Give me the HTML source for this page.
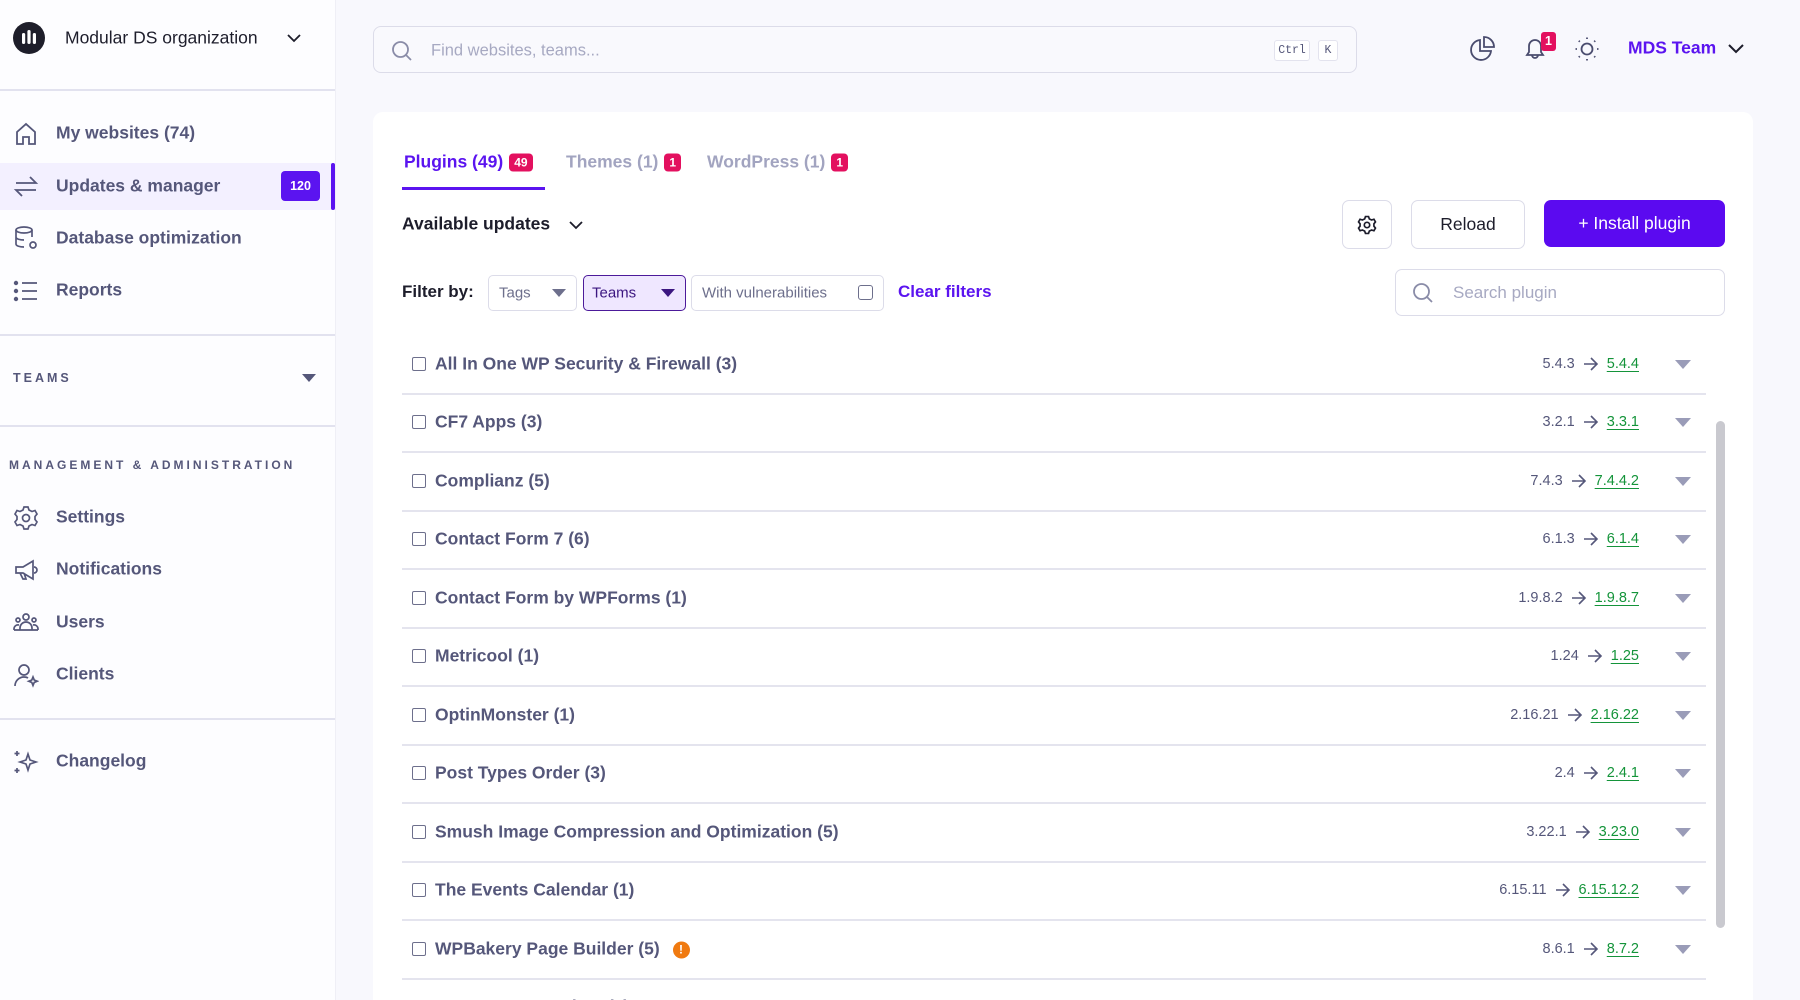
<!DOCTYPE html>
<html><head><meta charset="utf-8"><style>
*{box-sizing:border-box;margin:0;padding:0}
html{overflow:hidden;width:1800px;height:1000px}
body{width:1800px;height:1000px;overflow:hidden;background:#f8f8fd;font-family:"Liberation Sans",sans-serif;position:relative;color:#4a4c6e}
.a{position:absolute;white-space:nowrap}
.side{position:absolute;left:0;top:0;width:335px;height:1000px;background:#fdfdff}
.hr{position:absolute;left:0;width:335px;height:2px;background:#e2e2ef}
.nav{position:absolute;left:56px;font-size:17.5px;font-weight:bold;color:#55577a;transform:translateY(-50%);white-space:nowrap}
.ico{position:absolute;left:13px;width:26px;height:26px;transform:translateY(-50%)}
.cap{position:absolute;font-size:12.5px;letter-spacing:3px;font-weight:bold;color:#55577a;transform:translateY(-50%);white-space:nowrap}
.vc{transform:translateY(-50%)}
.name{position:absolute;left:435px;font-size:17.5px;font-weight:bold;color:#55577a;white-space:nowrap}
.cb{position:absolute;left:412px;width:14px;height:14px;border:1.6px solid #6d6f8c;border-radius:2px}
.line{position:absolute;left:402px;width:1304px;height:2px;background:#e4e4ee}
.ver{position:absolute;right:161px;font-size:14.5px;color:#55577a;white-space:nowrap}
.ver u{color:#14943a;text-decoration:underline;text-underline-offset:3px}
.ver svg{vertical-align:-3px;margin:0 8px}
.tri{position:absolute;left:1675px;width:0;height:0;border-left:8px solid transparent;border-right:8px solid transparent;border-top:9px solid #9a9cb8}
.bdg{display:inline-block;background:#e3105f;color:#fff;font-size:12px;font-weight:bold;border-radius:4px;padding:2px 5px;vertical-align:middle;margin-left:6px}
.box{position:absolute;border:1.5px solid #dcdce9;border-radius:5px;background:#fff}
</style></head><body>
<div class="side">
  <svg class="a" style="left:13px;top:22px" width="32" height="32" viewBox="0 0 32 32"><circle cx="16" cy="16" r="16" fill="#1e1e2a"/><rect x="9" y="11" width="3.2" height="11" rx="1.6" fill="#fff"/><rect x="14.4" y="8" width="3.2" height="14" rx="1.6" fill="#fff"/><rect x="19.8" y="11" width="3.2" height="11" rx="1.6" fill="#fff"/></svg>
  <div class="a vc" style="left:65px;top:38px;font-size:17.5px;color:#1d1d2b">Modular DS organization</div>
  <svg class="a" style="left:286px;top:32px" width="16" height="12" viewBox="0 0 16 12"><path d="M2 3l6 6 6-6" stroke="#1d1d2b" stroke-width="1.8" fill="none"/></svg>
  <div class="hr" style="top:89px"></div>
  <svg class="ico" style="top:134px" viewBox="0 0 26 26" fill="none" stroke="#55577a" stroke-width="1.8"><path d="M4 23V11l9-8 9 8v12h-6v-7h-6v7z"/></svg>
  <div class="nav" style="top:133px">My websites (74)</div>
  <div class="a" style="left:0;top:163px;width:335px;height:47px;background:#f3f0ff"></div>
  <div class="a" style="left:331px;top:163px;width:4px;height:47px;background:#5b14f0;border-radius:2px"></div>
  <svg class="ico" style="top:186px" viewBox="0 0 26 26" fill="none" stroke="#55577a" stroke-width="1.8"><path d="M3 10h20l-6-6M23 17H3l6 6"/></svg>
  <div class="nav" style="top:186px">Updates &amp; manager</div>
  <div class="a" style="left:281px;top:171px;width:39px;height:30px;background:#5b14f0;border-radius:4px;color:#fff;font-size:12.5px;font-weight:bold;text-align:center;line-height:30px">120</div>
  <svg class="ico" style="top:238px" viewBox="0 0 26 26" fill="none" stroke="#55577a" stroke-width="1.7"><ellipse cx="11" cy="5" rx="8" ry="3"/><path d="M3 5v14c0 2 4 3 8 3M19 5v7M3 12c0 2 4 3 8 3"/><circle cx="20" cy="20" r="3"/></svg>
  <div class="nav" style="top:238px">Database optimization</div>
  <svg class="ico" style="top:291px" viewBox="0 0 26 26" fill="none" stroke="#55577a" stroke-width="1.8"><path d="M9 5h15M9 13h15M9 21h15"/><circle cx="3" cy="5" r="1.3" fill="#55577a"/><circle cx="3" cy="13" r="1.3" fill="#55577a"/><circle cx="3" cy="21" r="1.3" fill="#55577a"/></svg>
  <div class="nav" style="top:290px">Reports</div>
  <div class="hr" style="top:334px"></div>
  <div class="cap" style="left:13px;top:378px">TEAMS</div>
  <div class="a" style="left:302px;top:374px;border-left:7px solid transparent;border-right:7px solid transparent;border-top:8px solid #55577a"></div>
  <div class="hr" style="top:425px"></div>
  <div class="cap" style="left:9px;top:465px;font-size:12px">MANAGEMENT &amp; ADMINISTRATION</div>
  <svg class="ico" style="top:518px" viewBox="0 0 26 26" fill="none" stroke="#55577a" stroke-width="1.7"><path d="M11 2h4l1 3 3 1.5 3-1 2 3.5-2 2.5v3l2 2.5-2 3.5-3-1-3 1.5-1 3h-4l-1-3-3-1.5-3 1-2-3.5 2-2.5v-3l-2-2.5 2-3.5 3 1 3-1.5z"/><circle cx="13" cy="13" r="3.5"/></svg>
  <div class="nav" style="top:517px">Settings</div>
  <svg class="ico" style="top:570px" viewBox="0 0 26 26" fill="none" stroke="#55577a" stroke-width="1.7"><path d="M3 10h7l10-6v18l-10-6H3zM7 16l3 6h3l-2-6M21 10a3 3 0 010 6"/></svg>
  <div class="nav" style="top:569px">Notifications</div>
  <svg class="ico" style="top:622px" viewBox="0 0 26 26" fill="none" stroke="#55577a" stroke-width="1.7"><circle cx="13" cy="8" r="3"/><circle cx="5" cy="11" r="2"/><circle cx="21" cy="11" r="2"/><path d="M7 21v-2a6 6 0 0112 0v2zM1 21v-1a4 4 0 015-4M25 21v-1a4 4 0 00-5-4M1 21h24"/></svg>
  <div class="nav" style="top:622px">Users</div>
  <svg class="ico" style="top:675px" viewBox="0 0 26 26" fill="none" stroke="#55577a" stroke-width="1.7"><circle cx="11" cy="8" r="5"/><path d="M2 24c0-5 4-9 9-9 2 0 3 .3 4 1M20 15l1.2 3 3 1.2-3 1.2-1.2 3-1.2-3-3-1.2 3-1.2z"/></svg>
  <div class="nav" style="top:674px">Clients</div>
  <div class="hr" style="top:718px"></div>
  <svg class="ico" style="top:762px" viewBox="0 0 26 26" fill="none" stroke="#55577a" stroke-width="1.7"><path d="M15 5l2 6 6 2-6 2-2 6-2-6-6-2 6-2zM4 2v5M1.5 4.5h5M4 19v5M1.5 21.5h5"/></svg>
  <div class="nav" style="top:761px">Changelog</div>
</div>
<div class="a" style="left:335px;top:0;width:1px;height:1000px;background:#efeff6"></div>

<div class="box" style="left:373px;top:26px;width:984px;height:47px;background:#f9f9fd;border-radius:8px"></div>
<svg class="a" style="left:391px;top:40px" width="22" height="22" viewBox="0 0 22 22" fill="none" stroke="#8a8ca8" stroke-width="1.8"><circle cx="9.5" cy="9.5" r="7.5"/><path d="M15 15l5 5"/></svg>
<div class="a vc" style="left:431px;top:51px;font-size:16.5px;color:#a7a9c2">Find websites, teams...</div>
<div class="a" style="left:1274px;top:40px;width:36px;height:21px;border:1px solid #e3e3ee;border-radius:3px;background:#fff;font:11.5px 'Liberation Mono',monospace;color:#55577a;text-align:center;line-height:19px">Ctrl</div>
<div class="a" style="left:1318px;top:40px;width:20px;height:21px;border:1px solid #e3e3ee;border-radius:3px;background:#fff;font:11.5px 'Liberation Mono',monospace;color:#55577a;text-align:center;line-height:19px">K</div>
<svg class="a" style="left:1469px;top:36px" width="26" height="26" viewBox="0 0 26 26" fill="none" stroke="#4a4c6e" stroke-width="1.8"><path d="M11 4a10 10 0 1011 11H11z"/><path d="M15 1v10h10A10 10 0 0015 1z"/></svg>
<svg class="a" style="left:1522px;top:36px" width="26" height="26" viewBox="0 0 26 26" fill="none" stroke="#4a4c6e" stroke-width="1.8"><path d="M5 19h16l-2-3v-6a6 6 0 00-12 0v6zM10 19a3 3 0 006 0"/></svg>
<div class="a" style="left:1541px;top:32px;width:15px;height:19px;background:#e3105f;border-radius:3px;color:#fff;font-size:12.5px;font-weight:bold;text-align:center;line-height:19px">1</div>
<svg class="a" style="left:1574px;top:36px" width="26" height="26" viewBox="0 0 26 26" fill="none" stroke="#4a4c6e" stroke-width="1.8"><circle cx="13" cy="13" r="5.5"/><path d="M13 1.5v1.5M13 23v1.5M1.5 13h1.5M23 13h1.5M4.8 4.8l1 1M20.2 20.2l1 1M4.8 21.2l1-1M20.2 5.8l1-1"/></svg>
<div class="a vc" style="left:1628px;top:48px;font-size:17.5px;font-weight:bold;color:#5b14f0">MDS Team</div>
<svg class="a" style="left:1727px;top:42px" width="18" height="12" viewBox="0 0 18 12"><path d="M2 3l7 7 7-7" stroke="#1d1d2b" stroke-width="2" fill="none"/></svg>

<div class="a" style="left:373px;top:112px;width:1380px;height:888px;background:#fff;border-radius:10px 10px 0 0"></div>
<div class="a vc" style="left:404px;top:162px;font-size:17.5px;font-weight:bold;color:#5b14f0">Plugins (49)<span class="bdg">49</span></div>
<div class="a" style="left:402px;top:187px;width:143px;height:3px;background:#5b14f0"></div>
<div class="a vc" style="left:566px;top:162px;font-size:17.5px;font-weight:bold;color:#a2a4c0">Themes (1)<span class="bdg">1</span></div>
<div class="a vc" style="left:707px;top:162px;font-size:17.5px;font-weight:bold;color:#a2a4c0">WordPress (1)<span class="bdg">1</span></div>
<div class="a vc" style="left:402px;top:224px;font-size:17.5px;font-weight:bold;color:#1d1d2b">Available updates</div>
<svg class="a" style="left:568px;top:219px" width="16" height="12" viewBox="0 0 16 12"><path d="M2 3l6 6 6-6" stroke="#1d1d2b" stroke-width="1.8" fill="none"/></svg>
<div class="box" style="left:1342px;top:200px;width:50px;height:49px;border-radius:7px"></div>
<svg class="a" style="left:1357px;top:215px" width="20" height="20" viewBox="0 0 26 26" fill="none" stroke="#1d1d2b" stroke-width="2.2"><path d="M11 2h4l1 3 3 1.5 3-1 2 3.5-2 2.5v3l2 2.5-2 3.5-3-1-3 1.5-1 3h-4l-1-3-3-1.5-3 1-2-3.5 2-2.5v-3l-2-2.5 2-3.5 3 1 3-1.5z"/><circle cx="13" cy="13" r="3.5"/></svg>
<div class="box" style="left:1411px;top:200px;width:114px;height:49px;border-radius:7px;font-size:17.5px;color:#1d1d2b;text-align:center;line-height:46px">Reload</div>
<div class="a" style="left:1544px;top:200px;width:181px;height:47px;border-radius:7px;background:#5b0af0;font-size:17.5px;color:#fff;text-align:center;line-height:47px">+ Install plugin</div>

<div class="a vc" style="left:402px;top:292px;font-size:17px;font-weight:bold;color:#1d1d2b">Filter by:</div>
<div class="box" style="left:488px;top:275px;width:89px;height:36px"></div>
<div class="a vc" style="left:499px;top:293px;font-size:15px;color:#6d6f8c">Tags</div>
<div class="a" style="left:552px;top:289px;border-left:7px solid transparent;border-right:7px solid transparent;border-top:8px solid #6d6f8c"></div>
<div class="box" style="left:583px;top:275px;width:103px;height:36px;background:#efe7ff;border-color:#4c1a9a"></div>
<div class="a vc" style="left:592px;top:293px;font-size:15px;color:#3b1680">Teams</div>
<div class="a" style="left:661px;top:289px;border-left:7px solid transparent;border-right:7px solid transparent;border-top:8px solid #3b1680"></div>
<div class="box" style="left:691px;top:275px;width:193px;height:36px"></div>
<div class="a vc" style="left:702px;top:293px;font-size:15px;color:#6d6f8c">With vulnerabilities</div>
<div class="a" style="left:858px;top:285px;width:15px;height:15px;border:1.6px solid #6d6f8c;border-radius:3px"></div>
<div class="a vc" style="left:898px;top:292px;font-size:17px;font-weight:bold;color:#5b14f0">Clear filters</div>
<div class="box" style="left:1395px;top:269px;width:330px;height:47px;border-radius:7px"></div>
<svg class="a" style="left:1412px;top:282px" width="22" height="22" viewBox="0 0 22 22" fill="none" stroke="#8a8ca8" stroke-width="1.8"><circle cx="9.5" cy="9.5" r="7.5"/><path d="M15 15l5 5"/></svg>
<div class="a vc" style="left:1453px;top:293px;font-size:17px;color:#a7a9c2">Search plugin</div>

<div class="a" style="left:1716px;top:421px;width:9px;height:507px;background:#c9c9cf;border-radius:5px"></div>

<div id="rows"></div>
<script>
var d=[["All In One WP Security &amp; Firewall (3)","5.4.3","5.4.4"],["CF7 Apps (3)","3.2.1","3.3.1"],["Complianz (5)","7.4.3","7.4.4.2"],["Contact Form 7 (6)","6.1.3","6.1.4"],["Contact Form by WPForms (1)","1.9.8.2","1.9.8.7"],["Metricool (1)","1.24","1.25"],["OptinMonster (1)","2.16.21","2.16.22"],["Post Types Order (3)","2.4","2.4.1"],["Smush Image Compression and Optimization (5)","3.22.1","3.23.0"],["The Events Calendar (1)","6.15.11","6.15.12.2"],["WPBakery Page Builder (5)","8.6.1","8.7.2"],["Yoast SEO Premium (2)","1.0","1.1"]];
var arr='<svg width="16" height="14" viewBox="0 0 16 14" fill="none" stroke="#55577a" stroke-width="1.6"><path d="M1 7h13M8 1l6 6-6 6"/></svg>';
var h="";
d.forEach(function(r,i){var c=364+58.45*i;
h+='<div class="cb" style="top:'+(c-7)+'px"></div><div class="name vc" style="top:'+c+'px">'+r[0]+(i==10?' <span style="display:inline-block;width:17px;height:17px;border-radius:50%;background:#f07a10;color:#fff;font-size:12px;text-align:center;line-height:17px;vertical-align:1px;margin-left:8px">!</span>':'')+'</div>';
h+='<div class="ver vc" style="top:'+c+'px">'+r[1]+arr+'<u>'+r[2]+'</u></div><div class="tri" style="top:'+(c-4)+'px"></div>';
if(i<11)h+='<div class="line" style="top:'+(c+29)+'px"></div>';});
document.getElementById("rows").innerHTML=h;
</script>
</body></html>
